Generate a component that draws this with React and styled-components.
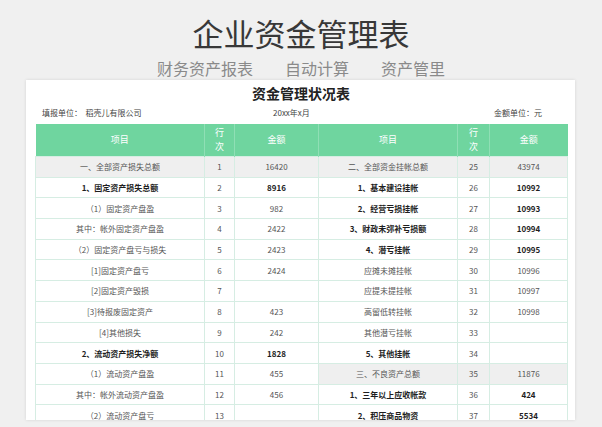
import React from 'react'
import styled, { createGlobalStyle } from 'styled-components'

const GlobalStyle = createGlobalStyle`
  html, body {
    margin: 0;
    padding: 0;
    background: #f0f0f0;
  }
  body {
    font-family: 'Noto Sans CJK SC', 'Noto Sans', sans-serif;
  }
`

const left = [
  { name: '一、全部资产损失总额', no: 1, amt: '16420', gray: true },
  { name: '1、固定资产损失总额', no: 2, amt: '8916', bold: true },
  { name: '（1）固定资产盘盈', no: 3, amt: '982' },
  { name: '其中：帐外固定资产盘盈', no: 4, amt: '2422' },
  { name: '（2）固定资产盘亏与损失', no: 5, amt: '2423' },
  { name: '[1]固定资产盘亏', no: 6, amt: '2424' },
  { name: '[2]固定资产毁损', no: 7, amt: '' },
  { name: '[3]待报废固定资产', no: 8, amt: '423' },
  { name: '[4]其他损失', no: 9, amt: '242' },
  { name: '2、流动资产损失净额', no: 10, amt: '1828', bold: true },
  { name: '（1）流动资产盘盈', no: 11, amt: '455' },
  { name: '其中：帐外流动资产盘盈', no: 12, amt: '456' },
  { name: '（2）流动资产盘亏', no: 13, amt: '' },
]

const right = [
  { name: '二、全部资金挂帐总额', no: 25, amt: '43974', gray: true },
  { name: '1、基本建设挂帐', no: 26, amt: '10992', bold: true },
  { name: '2、经营亏损挂帐', no: 27, amt: '10993', bold: true },
  { name: '3、财政未弥补亏损额', no: 28, amt: '10994', bold: true },
  { name: '4、潜亏挂帐', no: 29, amt: '10995', bold: true },
  { name: '应摊未摊挂帐', no: 30, amt: '10996' },
  { name: '应提未提挂帐', no: 31, amt: '10997' },
  { name: '高留低转挂帐', no: 32, amt: '10998' },
  { name: '其他潜亏挂帐', no: 33, amt: '' },
  { name: '5、其他挂帐', no: 34, amt: '', bold: true },
  { name: '三、不良资产总额', no: 35, amt: '11876', gray: true },
  { name: '1、三年以上应收帐款', no: 36, amt: '424', bold: true },
  { name: '2、积压商品物资', no: 37, amt: '5534', bold: true },
]

export default function App() {
  return (
    <>
      <GlobalStyle />
      <Page>
        <Title>企业资金管理表</Title>
        <Tags>
          <span>财务资产报表</span>
          <span>自动计算</span>
          <span>资产管里</span>
        </Tags>
        <Card>
          <SheetTitle>资金管理状况表</SheetTitle>
          <Info>
            <span>填报单位：&nbsp;&nbsp;稻壳儿有限公司</span>
            <span>20xx年x月</span>
            <Unit>金额单位：元</Unit>
          </Info>
          <Table>
            <colgroup>
              <col style={{ width: 169 }} />
              <col style={{ width: 30 }} />
              <col style={{ width: 84 }} />
              <col style={{ width: 139 }} />
              <col style={{ width: 32 }} />
              <col style={{ width: 78 }} />
            </colgroup>
            <thead>
              <tr>
                <Th>项目</Th>
                <Th>行<br />次</Th>
                <Th>金额</Th>
                <Th>项目</Th>
                <Th>行<br />次</Th>
                <Th>金额</Th>
              </tr>
            </thead>
            <tbody>
              {left.map((l, i) => {
                const r = right[i]
                return (
                  <tr key={i}>
                    <Td $gray={l.gray} $bold={l.bold}>{l.name}</Td>
                    <Td $gray={l.gray}>{l.no}</Td>
                    <Td $gray={l.gray} $bold={l.bold}>{l.amt}</Td>
                    <Td $gray={r.gray} $bold={r.bold}>{r.name}</Td>
                    <Td $gray={r.gray}>{r.no}</Td>
                    <Td $gray={r.gray} $bold={r.bold}>{r.amt}</Td>
                  </tr>
                )
              })}
            </tbody>
          </Table>
        </Card>
      </Page>
    </>
  )
}

const Page = styled.div`
  width: 602px;
  height: 427px;
  overflow: hidden;
  display: flex;
  flex-direction: column;
  align-items: center;
  padding-top: 13px;
  box-sizing: border-box;
`

const Title = styled.h1`
  margin: 0;
  font-size: 31px;
  line-height: 40px;
  font-weight: 400;
  color: #383838;
`

const Tags = styled.div`
  display: flex;
  gap: 32px;
  margin-top: 4px;
  font-size: 16px;
  line-height: 22px;
  color: #8a8a8a;
`

const Card = styled.div`
  margin-top: 1px;
  align-self: flex-start;
  margin-left: 26px;
  width: 549px;
  height: 340px;
  overflow: hidden;
  background: #fff;
  box-shadow: 0 0 3px rgba(0, 0, 0, 0.12);
  padding: 4px 8px 0 9px;
  box-sizing: border-box;
`

const SheetTitle = styled.div`
  text-align: center;
  font-size: 14px;
  line-height: 18px;
  font-weight: 700;
  color: #222;
`

const Info = styled.div`
  display: grid;
  grid-template-columns: 231px auto 1fr;
  padding: 3px 25px 0 7px;
  height: 19px;
  font-size: 8px;
  line-height: 16px;
  color: #444;
`

const Unit = styled.span`
  text-align: right;
`

const Table = styled.table`
  width: 532px;
  table-layout: fixed;
  border-collapse: collapse;
  font-size: 8px;
`

const Th = styled.th`
  height: 32px;
  padding: 0;
  background: #6fd59f;
  color: #fff;
  font-weight: 400;
  font-size: 9px;
  line-height: 14px;
  text-align: center;
  border-right: 1px solid #8fdfb5;
  &:last-child {
    border-right: none;
  }
`

const Td = styled.td`
  height: 20.7px;
  padding: 0;
  box-sizing: border-box;
  text-align: center;
  white-space: nowrap;
  border: 1px solid #d6ede3;
  background: ${(p) => (p.$gray ? '#efefef' : '#fff')};
  color: ${(p) => (p.$bold ? '#1e1e1e' : '#555')};
  font-weight: ${(p) => (p.$bold ? 700 : 400)};
`
